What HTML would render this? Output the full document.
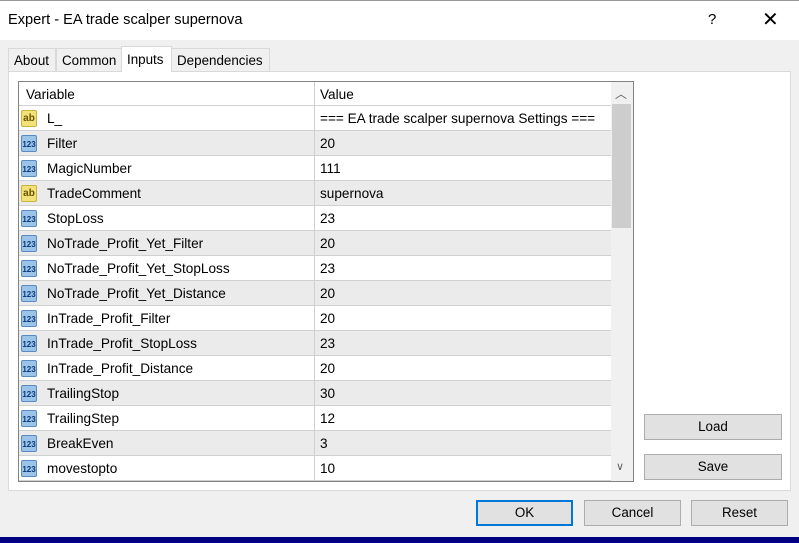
<!DOCTYPE html>
<html><head><style>
*{margin:0;padding:0;box-sizing:border-box}
body{width:799px;height:543px;overflow:hidden;background:#f0f0f0;font-family:"Liberation Sans",sans-serif;font-size:13.6px;color:#000;position:relative}
.abs{position:absolute}
.title{left:0;top:0;width:799px;height:40px;background:#fff;border-top:1px solid #999}
.tab{top:48px;height:23px;border:1px solid #d9d9d9;border-bottom:none;background:#f0f0f0;padding:4px 5px 0;font-size:13.4px}
.panel{left:8px;top:71px;width:783px;height:420px;background:#fff;border:1px solid #d9d9d9}
.tbl{left:18px;top:81px;width:616px;height:401px;border:1px solid #828282;background:#fff;overflow:hidden}
.row{position:absolute;left:0;width:592px;height:25px;border-bottom:1px solid #d0d0d0}
.row .n{position:absolute;left:28px;top:5px}
.row .v{position:absolute;left:301px;top:5px}
.row .d{position:absolute;left:295px;top:0;width:1px;height:25px;background:#d0d0d0}
.ic{position:absolute;left:2px;top:4px;width:16px;height:17px;border-radius:2px;font-size:8px;font-weight:bold;text-align:center;line-height:18px}
.num{background:#9cc3e8;border:1px solid #5a8ac0;color:#0a3a7a}
.str{background:#f3e27a;border:1px solid #c9b240;color:#6a5200;font-size:10px;line-height:16px}
.btn{height:26px;border:1px solid #adadad;background:#e1e1e1;text-align:center;line-height:24px;font-size:13.4px}
</style></head><body>
<div class="abs title"><div class="abs" style="left:8px;top:11px;font-size:14.6px">Expert - EA trade scalper supernova</div>
<div class="abs" style="left:708px;top:10px;font-size:15px">?</div>
<div class="abs" style="left:762px;top:6px;font-size:20px;font-weight:300">✕</div></div>
<div class="abs tab" style="left:8px;width:48px">About</div>
<div class="abs tab" style="left:56px;width:66px">Common</div>
<div class="abs tab" style="left:171px;width:99px">Dependencies</div>
<div class="abs panel"></div>
<div class="abs tab" style="left:121px;top:46px;height:26px;width:51px;background:#fff;border-color:#d9d9d9;padding-top:5px">Inputs</div>
<div class="abs tbl">
<div class="row" style="top:0;height:24px"><span class="n" style="left:7px">Variable</span><div class="d"></div><span class="v">Value</span></div>
<div id="rows"></div>
<div class="abs" style="left:592px;top:0;width:22px;height:399px;background:#f0f0f0"></div>
<div class="abs" style="left:593px;top:22px;width:19px;height:124px;background:#cdcdcd"></div>
<div class="abs" style="left:596px;top:3px;color:#606060;font-size:12px">︿</div>
<div class="abs" style="left:597px;top:378px;color:#606060;font-size:11px">∨</div>
</div>
<div class="abs btn" style="left:644px;top:414px;width:138px">Load</div>
<div class="abs btn" style="left:644px;top:454px;width:138px">Save</div>
<div class="abs btn" style="left:476px;top:500px;width:97px;border:2px solid #0078d7;line-height:22px">OK</div>
<div class="abs btn" style="left:584px;top:500px;width:97px">Cancel</div>
<div class="abs btn" style="left:691px;top:500px;width:97px">Reset</div>
<div class="abs" style="left:0;top:537px;width:799px;height:6px;background:#000080"></div>
<script>
var d=[["s","L_","=== EA trade scalper supernova Settings ==="],["n","Filter","20"],["n","MagicNumber","111"],["s","TradeComment","supernova"],["n","StopLoss","23"],["n","NoTrade_Profit_Yet_Filter","20"],["n","NoTrade_Profit_Yet_StopLoss","23"],["n","NoTrade_Profit_Yet_Distance","20"],["n","InTrade_Profit_Filter","20"],["n","InTrade_Profit_StopLoss","23"],["n","InTrade_Profit_Distance","20"],["n","TrailingStop","30"],["n","TrailingStep","12"],["n","BreakEven","3"],["n","movestopto","10"]];
var h="";d.forEach(function(r,i){h+='<div class="row" style="top:'+(24+25*i)+'px;background:'+(i%2?'#ebebeb':'#fff')+'"><div class="ic '+(r[0]=="n"?"num":"str")+'">'+(r[0]=="n"?"123":"ab")+'</div><span class="n">'+r[1]+'</span><div class="d"></div><span class="v">'+r[2]+'</span></div>'});
document.getElementById("rows").innerHTML=h;
</script>
</body></html>
